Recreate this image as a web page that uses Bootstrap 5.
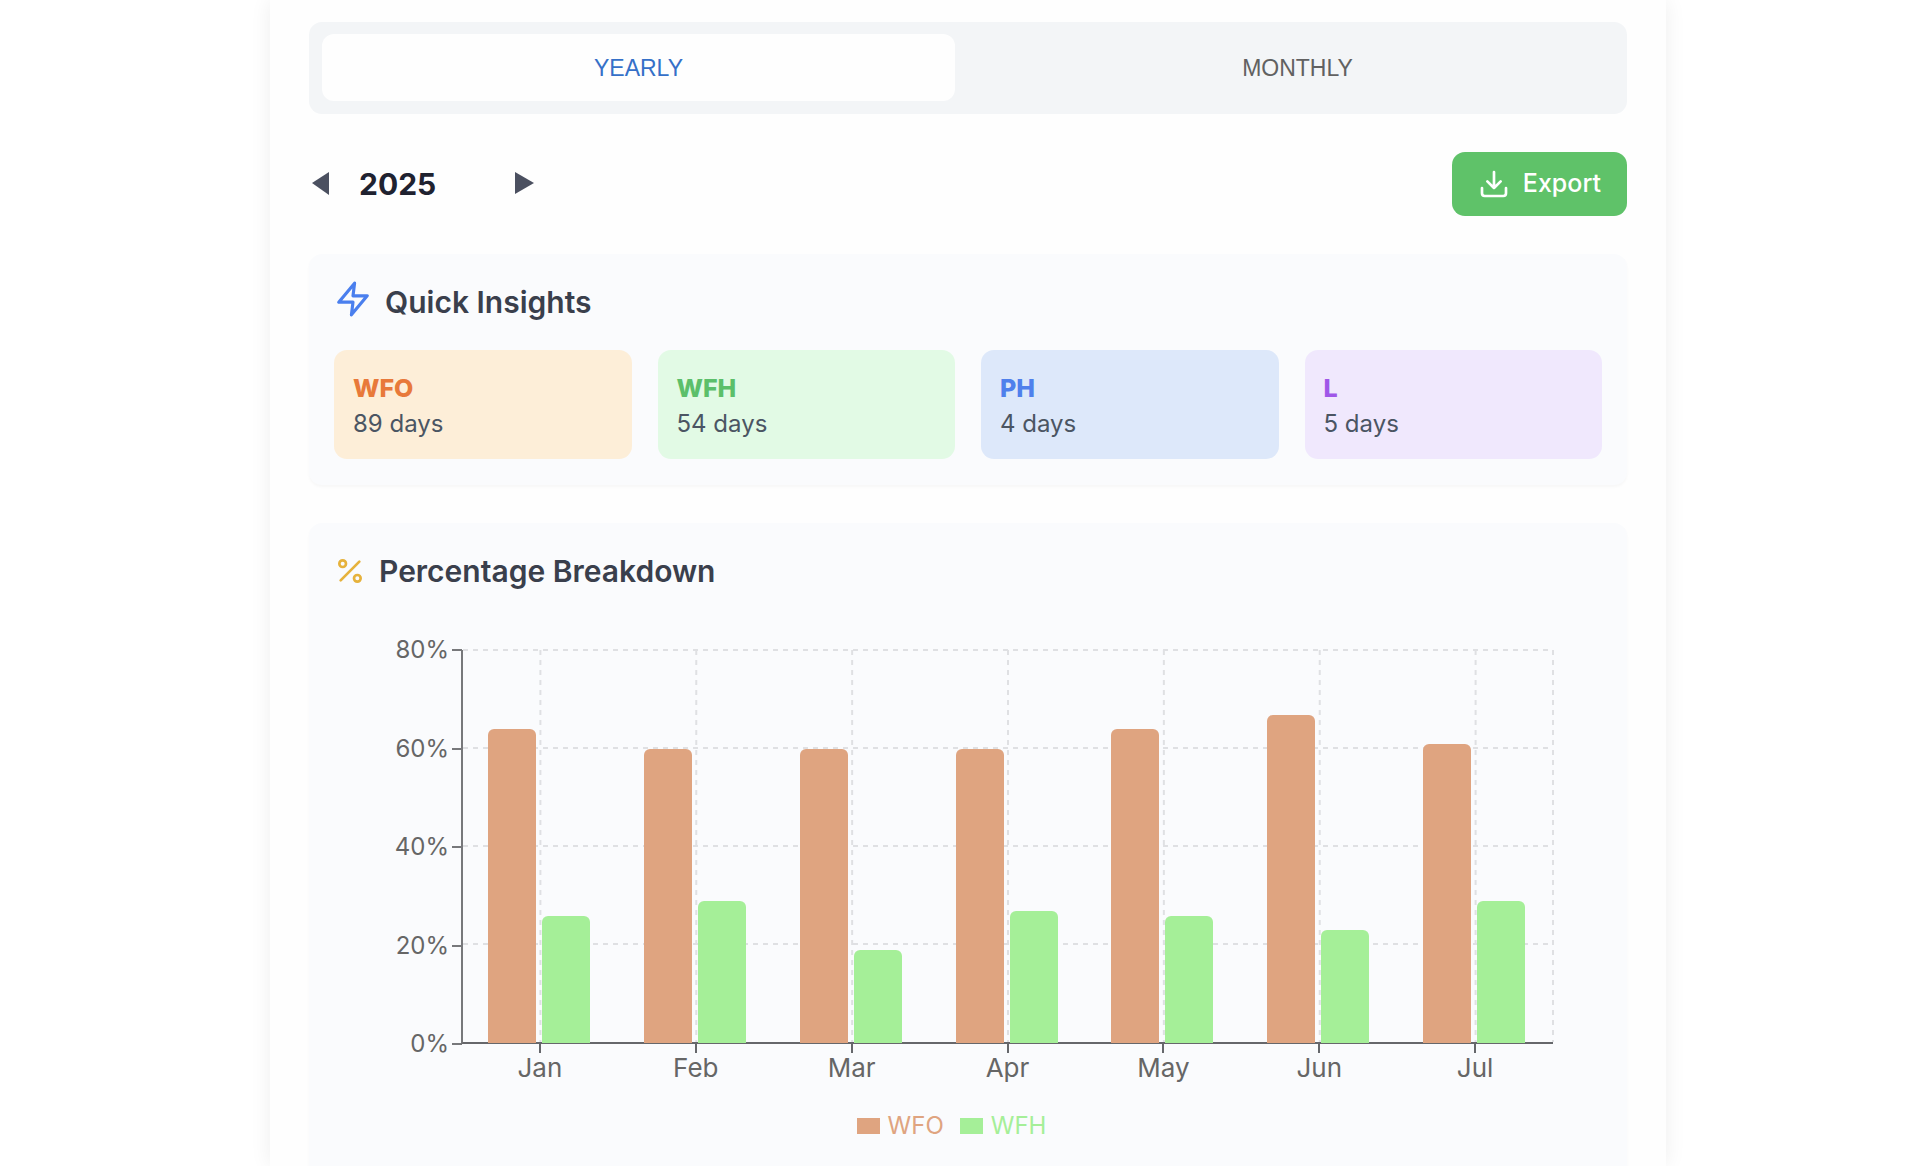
<!DOCTYPE html>
<html lang="en">
<head>
<meta charset="utf-8">
<meta name="viewport" content="width=device-width, initial-scale=1">
<title>Attendance summary</title>
<link href="https://cdn.jsdelivr.net/npm/bootstrap@5.3.0/dist/css/bootstrap.min.css" rel="stylesheet">
<style>
  body { background: #fff; font-family: Inter, "Open Sans", sans-serif; color: #4b5563; }
  .page-shell { padding-left: 14px; }
  .summary-panel { max-width: 1396px; min-height: 100vh; padding: 22px 39px 0; gap: 38px; background: #fefefe; box-shadow: 0 0 20px rgba(0,0,0,.07); }
  .period-tabs { background: #f3f5f7; border-radius: 13px; padding: 12px 13px 13px; gap: 26px; }
  .period-tabs .nav-link { height: 67px; border: 0; background: transparent; border-radius: 12px; color: #616161; font: 400 23px/30px "Liberation Sans", Arial, sans-serif; }
  .period-tabs .nav-link.active { background: #fefefe; color: #3570c8; }
  .year-picker { gap: 26px; }
  .year-picker h1 { width: 127px; font-size: 30px; line-height: 40px; font-weight: 700; color: #1f2230; }
  .year-picker button { color: #4b5060; line-height: 0; }
  .btn-export { --bs-btn-color: #fff; --bs-btn-bg: #5fc269; --bs-btn-hover-color: #fff; --bs-btn-hover-bg: #4fb35a; height: 64px; padding: 0 26px; gap: 13px; border: 0; border-radius: 13px; font-size: 25px; font-weight: 500; }
  .soft-card { background: #fafbfd; border-radius: 13px; padding: 26px 25px; box-shadow: 0 2px 3px rgba(0,0,0,.03); }
  .soft-card.to-edge { border-radius: 13px 13px 0 0; padding-bottom: 0; }
  .card-heading { height: 44px; gap: 13px; }
  .card-heading h2 { font-size: 30px; line-height: 44px; font-weight: 600; color: #3a3f4c; }
  .insights { --bs-gutter-x: 26px; --bs-gutter-y: 26px; padding-top: 26px; }
  .tile { border-radius: 13px; padding: 20px 19px 17px; line-height: 36px; }
  .tile h3 { font-size: 25px; line-height: 36px; font-weight: 800; }
  .tile p { font-size: 24px; }
  .tile-wfo { background: #fdeed8; } .tile-wfo h3 { color: #e8793a; }
  .tile-wfh { background: #e2fae5; } .tile-wfh h3 { color: #5cbf6a; }
  .tile-ph  { background: #dde8fa; } .tile-ph h3  { color: #4f80ec; }
  .tile-l   { background: #f0e8fd; } .tile-l h3   { color: #9f57e8; }
  .chart { padding: 42px 49px 0 0; font-size: 26px; line-height: 30px; color: #666; }
  .y-axis { width: 128px; height: 424px; font-size: 24px; }
  .y-axis span { gap: 3px; }
  .y-axis span::after { content: ""; width: 10px; height: 2px; background: #77787b; }
  .plot-col { padding-top: 15px; }
  .plot { height: 394px; border-left: 2px solid #77787b; border-bottom: 2px solid #66676b; margin-left: -1px; }
  .plot svg { inset: 0; }
  .plot line { stroke: #dfe0e3; stroke-width: 2; stroke-dasharray: 5 5; }
  .month { flex: 1 1 0; gap: 6px; padding-right: 3px; }
  .bar { width: 48px; border-radius: 6px 6px 0 0; z-index: 1; margin-bottom: -1px; }
  .bar-wfo { background: #dfa480; }
  .bar-wfh { background: #a5ef98; }
  .x-axis span { flex: 1 1 0; }
  .x-axis span::before { content: ""; width: 2px; height: 9px; background: #66676b; }
  .legend-row { gap: 16px; padding: 28px 33px 0 0; font-size: 24px; line-height: 30px; }
  .legend-row span { gap: 8px; }
  .legend-row i { width: 23px; height: 16px; background: currentColor; }
  .t-wfo { color: #dfa480; }
  .t-wfh { color: #a5ef98; }
  .stroked { fill: none; stroke: currentColor; stroke-width: 2; stroke-linecap: round; stroke-linejoin: round; }
  .icon-bolt { color: #4a7fee; }
  .icon-percent { color: #e6b23c; }
</style>
<script src="https://cdn.jsdelivr.net/npm/bootstrap@5.3.0/dist/js/bootstrap.bundle.min.js"></script>
</head>
<body>
<div class="page-shell">
<main class="summary-panel mx-auto d-flex flex-column">

  <nav class="period-tabs nav nav-fill flex-nowrap" aria-label="Period">
    <button type="button" class="nav-link active w-50" aria-current="true">YEARLY</button>
    <button type="button" class="nav-link w-50">MONTHLY</button>
  </nav>

  <div class="d-flex justify-content-between align-items-center">
    <div class="year-picker d-flex align-items-center">
      <button type="button" class="btn p-0 border-0" aria-label="Previous year"><svg width="24" height="24" fill="currentColor"><path d="M3 11 20 0V23Z"/></svg></button>
      <h1 class="mb-0">2025</h1>
      <button type="button" class="btn p-0 border-0" aria-label="Next year"><svg width="24" height="24" fill="currentColor"><path d="M3 0 22 11 3 22Z"/></svg></button>
    </div>
    <button type="button" class="btn btn-export d-flex align-items-center">
      <svg class="stroked" width="32" height="32" viewBox="0 0 24 24"><path d="M21 15v4a2 2 0 0 1-2 2H5a2 2 0 0 1-2-2v-4M7 10l5 5 5-5M12 15V3"/></svg>
      Export
    </button>
  </div>

  <section class="soft-card">
    <div class="card-heading d-flex align-items-center">
      <svg class="stroked icon-bolt align-self-start" width="38" height="38" viewBox="0 0 24 24"><path d="M13 2 3 14h9l-1 8 10-12h-9Z"/></svg>
      <h2 class="mb-0">Quick Insights</h2>
    </div>
    <div class="insights row row-cols-4 mt-0">
      <div class="col mt-0"><div class="tile tile-wfo"><h3 class="mb-0">WFO</h3><p class="mb-0">89 days</p></div></div>
      <div class="col mt-0"><div class="tile tile-wfh"><h3 class="mb-0">WFH</h3><p class="mb-0">54 days</p></div></div>
      <div class="col mt-0"><div class="tile tile-ph"><h3 class="mb-0">PH</h3><p class="mb-0">4 days</p></div></div>
      <div class="col mt-0"><div class="tile tile-l"><h3 class="mb-0">L</h3><p class="mb-0">5 days</p></div></div>
    </div>
  </section>

  <section class="soft-card to-edge flex-grow-1">
    <div class="card-heading d-flex align-items-center">
      <svg class="stroked icon-percent" width="32" height="32" viewBox="0 0 24 24"><path d="M19 5 5 19"/><circle cx="6.5" cy="6.5" r="2.5"/><circle cx="17.5" cy="17.5" r="2.5"/></svg>
      <h2 class="mb-0">Percentage Breakdown</h2>
    </div>

    <div class="chart d-flex">
      <div class="y-axis d-flex flex-column justify-content-between flex-shrink-0">
        <span class="d-flex align-items-center justify-content-end">80%</span>
        <span class="d-flex align-items-center justify-content-end">60%</span>
        <span class="d-flex align-items-center justify-content-end">40%</span>
        <span class="d-flex align-items-center justify-content-end">20%</span>
        <span class="d-flex align-items-center justify-content-end">0%</span>
      </div>
      <div class="plot-col flex-grow-1">
        <div class="plot d-flex position-relative">
          <svg class="position-absolute overflow-visible" width="100%" height="100%" aria-hidden="true">
            <line x1="0" x2="100%" y1="0" y2="0"/><line x1="0" x2="100%" y1="25%" y2="25%"/><line x1="0" x2="100%" y1="50%" y2="50%"/><line x1="0" x2="100%" y1="75%" y2="75%"/>
            <line x1="7.1%" x2="7.1%" y1="0" y2="100%"/><line x1="21.4%" x2="21.4%" y1="0" y2="100%"/><line x1="35.7%" x2="35.7%" y1="0" y2="100%"/><line x1="50%" x2="50%" y1="0" y2="100%"/><line x1="64.3%" x2="64.3%" y1="0" y2="100%"/><line x1="78.6%" x2="78.6%" y1="0" y2="100%"/><line x1="92.9%" x2="92.9%" y1="0" y2="100%"/><line x1="100%" x2="100%" y1="0" y2="100%"/>
          </svg>
          <div class="month d-flex align-items-end justify-content-center"><div class="bar bar-wfo" style="height:80%"></div><div class="bar bar-wfh" style="height:32.5%"></div></div>
          <div class="month d-flex align-items-end justify-content-center"><div class="bar bar-wfo" style="height:75%"></div><div class="bar bar-wfh" style="height:36.25%"></div></div>
          <div class="month d-flex align-items-end justify-content-center"><div class="bar bar-wfo" style="height:75%"></div><div class="bar bar-wfh" style="height:23.75%"></div></div>
          <div class="month d-flex align-items-end justify-content-center"><div class="bar bar-wfo" style="height:75%"></div><div class="bar bar-wfh" style="height:33.75%"></div></div>
          <div class="month d-flex align-items-end justify-content-center"><div class="bar bar-wfo" style="height:80%"></div><div class="bar bar-wfh" style="height:32.5%"></div></div>
          <div class="month d-flex align-items-end justify-content-center"><div class="bar bar-wfo" style="height:83.75%"></div><div class="bar bar-wfh" style="height:28.75%"></div></div>
          <div class="month d-flex align-items-end justify-content-center"><div class="bar bar-wfo" style="height:76.25%"></div><div class="bar bar-wfh" style="height:36.25%"></div></div>
        </div>
        <div class="x-axis d-flex">
          <span class="d-flex flex-column align-items-center">Jan</span>
          <span class="d-flex flex-column align-items-center">Feb</span>
          <span class="d-flex flex-column align-items-center">Mar</span>
          <span class="d-flex flex-column align-items-center">Apr</span>
          <span class="d-flex flex-column align-items-center">May</span>
          <span class="d-flex flex-column align-items-center">Jun</span>
          <span class="d-flex flex-column align-items-center">Jul</span>
        </div>
      </div>
    </div>
    <div class="legend-row d-flex justify-content-center">
      <span class="t-wfo d-flex align-items-center"><i></i>WFO</span>
      <span class="t-wfh d-flex align-items-center"><i></i>WFH</span>
    </div>
  </section>
</main>
</div>
</body>
</html>
